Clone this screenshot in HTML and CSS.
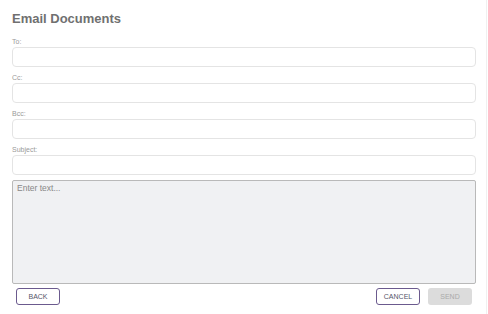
FILE: index.html
```html
<!DOCTYPE html>
<html lang="en">

<head>
    <meta charset="UTF-8">
    <meta name="viewport" content="width=device-width, initial-scale=1.0">
    <title>Email Documents</title>
    <link rel="stylesheet" href="styles.css">
</head>

<body>
    <div class="dialog">
        <h1>Email Documents</h1>
        <div class="field">
            <label for="to">To:</label>
            <input type="text" id="to">
        </div>
        <div class="field">
            <label for="cc">Cc:</label>
            <input type="text" id="cc">
        </div>
        <div class="field">
            <label for="bcc">Bcc:</label>
            <input type="text" id="bcc">
        </div>
        <div class="field">
            <label for="subject">Subject:</label>
            <input type="text" id="subject">
        </div>
        <textarea id="body" placeholder="Enter text..."></textarea>
        <div class="actions">
            <button class="btn outline">BACK</button>
            <div class="right">
                <button class="btn outline">CANCEL</button>
                <button class="btn disabled" disabled>SEND</button>
            </div>
        </div>
    </div>
</body>

</html>
```

FILE: styles.css
```css
body {
    font-family: "Liberation Sans", Arial, sans-serif;
    background-color: #fff;
    color: #666;
    margin: 0;
}

.dialog {
    width: 487px;
    height: 314px;
    box-sizing: border-box;
    border-right: 1px solid #f0f0f0;
    padding: 11px 10px 0 12px;
}

.dialog h1 {
    margin: 0 0 12px;
    font-size: 13px;
    line-height: 15px;
    font-weight: bold;
    color: #707070;
}

.field {
    display: flex;
    flex-direction: column;
    margin-bottom: 7px;
}

.field label {
    font-size: 7px;
    line-height: 8px;
    color: #9a9a9a;
    margin-bottom: 1px;
}

.field input {
    height: 20px;
    box-sizing: border-box;
    border: 1px solid #e4e4e4;
    border-radius: 4px;
    padding: 0 6px;
    outline: none;
}

textarea {
    display: block;
    width: 100%;
    height: 104px;
    box-sizing: border-box;
    margin-top: -2px;
    background-color: #f0f1f3;
    border: 1px solid #b9b9b9;
    border-radius: 2px;
    padding: 2px 4px;
    font-family: "Liberation Sans", Arial, sans-serif;
    font-size: 8.5px;
    resize: none;
    outline: none;
}

textarea::placeholder {
    color: #888;
}

.actions {
    display: flex;
    justify-content: space-between;
    padding: 4px 4px 0;
}

.right {
    display: flex;
    gap: 8px;
}

.btn {
    width: 44px;
    height: 17px;
    box-sizing: border-box;
    border-radius: 3px;
    font-family: "Liberation Sans", Arial, sans-serif;
    font-size: 7px;
    padding: 0;
    cursor: pointer;
}

.btn.outline {
    background-color: #fff;
    border: 1px solid #6b5a8e;
    color: #55556a;
}

.btn.disabled {
    background-color: #dcdcdc;
    border: none;
    color: #aaa;
    cursor: default;
}
```
